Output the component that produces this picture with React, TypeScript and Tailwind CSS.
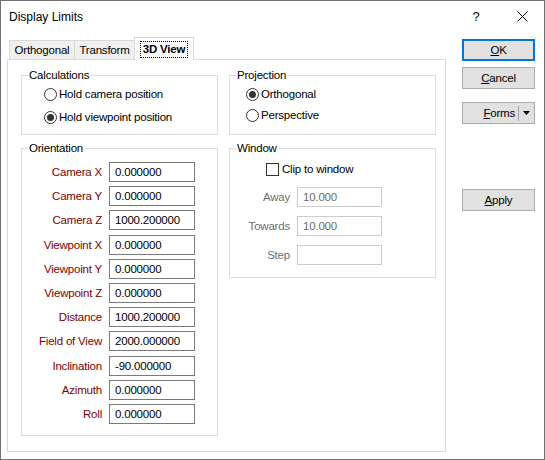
import React from 'react';

const orientation = [
  { label: 'Camera X', value: '0.000000' },
  { label: 'Camera Y', value: '0.000000' },
  { label: 'Camera Z', value: '1000.200000' },
  { label: 'Viewpoint X', value: '0.000000' },
  { label: 'Viewpoint Y', value: '0.000000' },
  { label: 'Viewpoint Z', value: '0.000000' },
  { label: 'Distance', value: '1000.200000' },
  { label: 'Field of View', value: '2000.000000' },
  { label: 'Inclination', value: '-90.000000' },
  { label: 'Azimuth', value: '0.000000' },
  { label: 'Roll', value: '0.000000' },
];

const windowFields = [
  { label: 'Away', value: '10.000' },
  { label: 'Towards', value: '10.000' },
  { label: 'Step', value: '' },
];

const Group: React.FC<{ title: string; className?: string; children: React.ReactNode }> = ({ title, className, children }) => (
  <fieldset className={`border border-[#dcdcdc] min-w-0 ${className ?? ''}`}>
    <legend className="ml-[6px] px-[1px] leading-[16px]">{title}</legend>
    {children}
  </fieldset>
);

const Radio: React.FC<{ checked?: boolean; label: string }> = ({ checked, label }) => (
  <div className="flex items-center h-[16px] gap-[2px]">
    <span className="w-[13px] h-[13px] rounded-full border border-[#333333] bg-white flex items-center justify-center">
      {checked && <span className="w-[7px] h-[7px] rounded-full bg-[#333333]" />}
    </span>
    <span>{label}</span>
  </div>
);

const Button: React.FC<{ primary?: boolean; children: React.ReactNode; className?: string }> = ({ primary, children, className }) => (
  <div
    className={`h-[22px] w-[73px] bg-[#e1e1e1] flex items-center justify-center ${
      primary ? 'border-2 border-[#0078d7]' : 'border border-[#adadad]'
    } ${className ?? ''}`}
  >
    {children}
  </div>
);

export default function App() {
  return (
    <div className="w-[545px] h-[460px] bg-white border border-[#707070] font-['Liberation_Sans',Arial,sans-serif] text-[11.5px] tracking-[-0.2px] leading-[16px] text-black flex flex-col">
      {/* title bar */}
      <div className="h-[29px] flex items-center pl-[8px] pt-[2px]">
        <span className="flex-1 text-[12px] tracking-normal">Display Limits</span>
        <span className="w-[20px] text-center text-[13px]">?</span>
        <svg className="ml-[31px] mr-[16px]" width="11" height="11" viewBox="0 0 11 11">
          <path d="M0.5 0.5 L10.5 10.5 M10.5 0.5 L0.5 10.5" stroke="#000" strokeWidth="1" />
        </svg>
      </div>

      <div className="flex pl-[6px] pt-[7px]">
        {/* tabs + panel */}
        <div className="w-[439px] flex flex-col">
          <div className="flex items-end h-[22px] pl-[2px]">
            <div className="h-[19px] w-[66px] bg-[#f0f0f0] border border-b-0 border-[#d9d9d9] flex items-center justify-center">
              Orthogonal
            </div>
            <div className="h-[19px] w-[60px] bg-[#f0f0f0] border border-l-0 border-b-0 border-[#d9d9d9] flex items-center justify-center">
              Transform
            </div>
            <div className="relative z-10 -mb-[1px] -ml-[1px] h-[23px] w-[60px] bg-white border border-b-0 border-[#d9d9d9] flex items-center justify-center">
              <span className="border border-dotted border-black px-[2px] font-bold leading-[15px]">3D View</span>
            </div>
          </div>

          <div className="h-[393px] border border-[#d9d9d9] flex gap-[11px] pl-[13px] pt-[7px]">
            {/* left column */}
            <div className="w-[197px] flex flex-col gap-[5px]">
              <Group title="Calculations">
                <div className="flex flex-col gap-[7px] pl-[22px] pt-[3px] pb-[9px]">
                  <Radio label="Hold camera position" />
                  <Radio checked label="Hold viewpoint position" />
                </div>
              </Group>
              <Group title="Orientation">
                <div className="flex flex-col gap-[4.2px] pt-[6px] pb-[11px]">
                  {orientation.map((f) => (
                    <div key={f.label} className="flex items-center">
                      <span className="w-[80px] text-right text-[#800000]">{f.label}</span>
                      <div className="ml-[7px] w-[86px] h-[20px] border border-[#7a7a7a] pl-[5px] leading-[18px]">
                        {f.value}
                      </div>
                    </div>
                  ))}
                </div>
              </Group>
            </div>

            {/* right column */}
            <div className="w-[207px] flex flex-col gap-[5px]">
              <Group title="Projection">
                <div className="flex flex-col gap-[5px] pl-[16px] pt-[3px] pb-[11px]">
                  <Radio checked label="Orthogonal" />
                  <Radio label="Perspective" />
                </div>
              </Group>
              <Group title="Window">
                <div className="flex flex-col pt-[5px] pb-[12px]">
                  <div className="flex items-center h-[16px] gap-[3px] pl-[36px]">
                    <span className="w-[13px] h-[13px] border border-[#333333] bg-white" />
                    <span>Clip to window</span>
                  </div>
                  <div className="flex flex-col gap-[9px] mt-[10px]">
                    {windowFields.map((f) => (
                      <div key={f.label} className="flex items-center">
                        <span className="w-[60px] text-right text-[#6d6d6d]">{f.label}</span>
                        <div className="ml-[7px] w-[85px] h-[20px] border border-[#cccccc] pl-[5px] leading-[18px] text-[#6d6d6d]">
                          {f.value}
                        </div>
                      </div>
                    ))}
                  </div>
                </div>
              </Group>
            </div>
          </div>
        </div>

        {/* buttons */}
        <div className="ml-[16px] pt-[2px] flex flex-col">
          <Button primary>
            <span><span className="underline">O</span>K</span>
          </Button>
          <Button className="mt-[6px]">
            <span><span className="underline">C</span>ancel</span>
          </Button>
          <Button className="mt-[13px] !justify-end pr-[2px]">
            <span><span className="underline">F</span>orms</span>
            <span className="w-px h-[15px] bg-[#a0a0a0] ml-[3px] mr-[4px]" />
            <svg width="7" height="4" viewBox="0 0 7 4" className="mr-[2px]">
              <path d="M0 0 H7 L3.5 4 Z" fill="#000" />
            </svg>
          </Button>
          <Button className="mt-[65px]">
            <span><span className="underline">A</span>pply</span>
          </Button>
        </div>
      </div>
    </div>
  );
}
